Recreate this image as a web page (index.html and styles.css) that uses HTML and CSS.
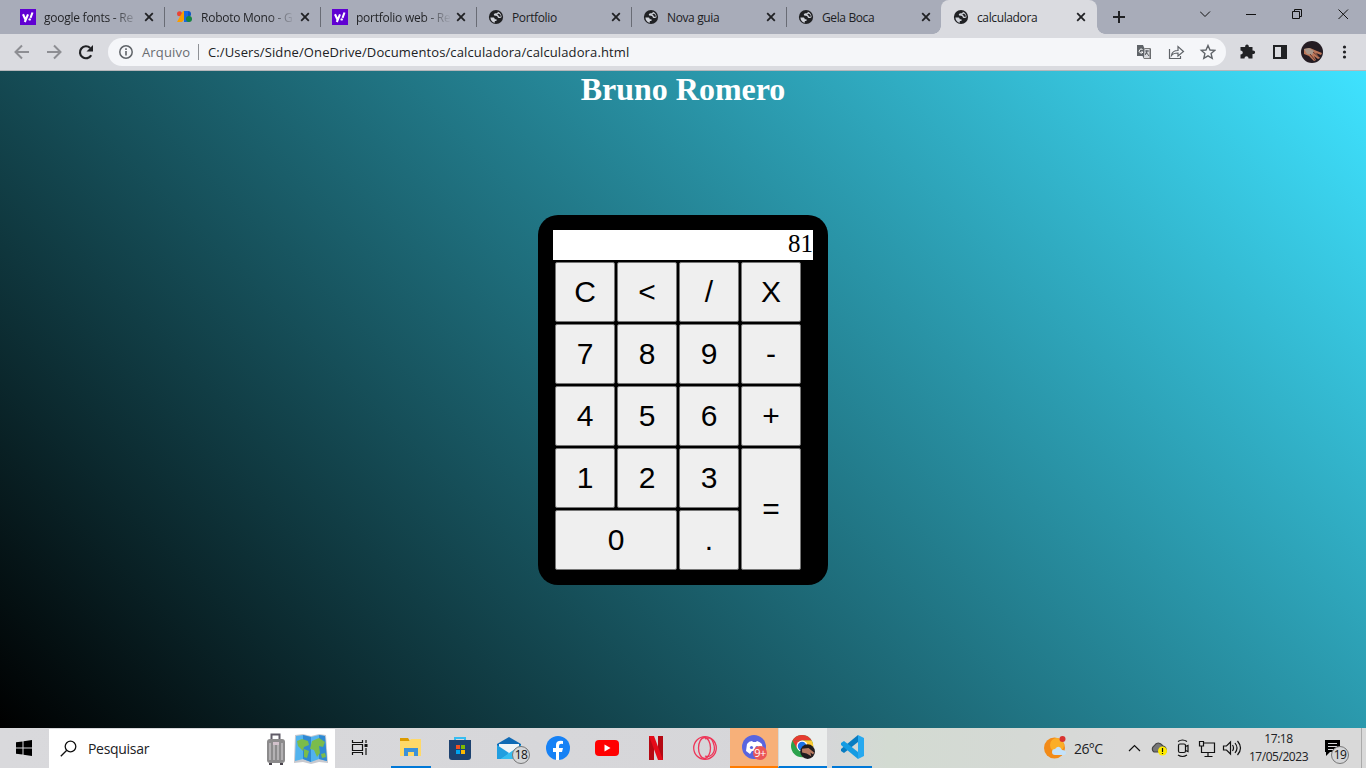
FILE: index.html
```html
<!DOCTYPE html>
<html lang="pt-BR">
<head>
<meta charset="utf-8">
<title>calculadora</title>
<link rel="stylesheet" href="styles.css">
</head>
<body>
<svg width="0" height="0" class="defs" aria-hidden="true">
  <symbol id="globe" viewBox="0 0 16 16"><circle cx="8" cy="8" r="7.100" fill="#202124"/><path d="M2.400 8.500h2.400c1.500 0 1.900.7 1.900 1.700h1.800v1.700H6.800v1.900C4.300 13.300 2.500 11.200 2.400 8.500zM9.800 2.700c2.200.8 3.700 2.800 3.800 5.200-1 1.500-3.800 1.500-4.100-.1-.3-1.400-3.400-.3-3.700-2 0-1.400 1.500-1.500 2.700-1.600 1 0 1.300-.6 1.300-1.500z" fill="#d0d3da"/><path d="M10.500 4.500c1.500.5 2.300 1.800 2.400 3-.7.500-1.700.4-2 0-.3-1.300-1.200-1.800-2.300-2 1 0 1.700-.3 1.900-1z" fill="#202124"/></symbol>
  <symbol id="close" viewBox="0 0 10 10"><path d="M1.200 1.200l7.600 7.600M8.800 1.200L1.200 8.800" stroke="#202124" stroke-width="1.800"/></symbol>
  <symbol id="yahoo" viewBox="0 0 16 16"><path fill="#6001d2" d="M0 0h16v16H0z"/><path d="M3 5.300l2.300 5M8 5.300L4.800 13M12.500 3.500l-2 5.300" stroke="#fff" stroke-width="2.100" fill="none"/><circle cx="9.700" cy="10.400" r="1.200" fill="#fff"/></symbol>
</svg>
<header class="tabs">
  <div class="tab"><svg class="fav"><use href="#yahoo"/></svg><span class="title fade">google fonts - Re</span><svg class="x"><use href="#close"/></svg></div>
  <div class="tab"><svg class="fav" viewBox="0 0 16 16"><circle cx="2.500" cy="4.700" r="2.500" fill="#ea4335"/><path d="M6 2h4v5L5 13H0z" fill="#fa9d00"/><path d="M7 2h4v11H7z" fill="#1a68df"/><path d="M11 2a3 3 0 010 6z" fill="#0b57c4"/><path d="M11 7a3 3 0 010 6z" fill="#34a853"/><circle cx="12" cy="10" r="3" fill="#168443"/></svg><span class="title fade">Roboto Mono - G</span><svg class="x"><use href="#close"/></svg></div>
  <div class="tab"><svg class="fav"><use href="#yahoo"/></svg><span class="title fade">portfolio web - Re</span><svg class="x"><use href="#close"/></svg></div>
  <div class="tab"><svg class="fav"><use href="#globe"/></svg><span class="title">Portfolio</span><svg class="x"><use href="#close"/></svg></div>
  <div class="tab"><svg class="fav"><use href="#globe"/></svg><span class="title">Nova guia</span><svg class="x"><use href="#close"/></svg></div>
  <div class="tab last"><svg class="fav"><use href="#globe"/></svg><span class="title">Gela Boca</span><svg class="x"><use href="#close"/></svg></div>
  <div class="tab active"><svg class="fav"><use href="#globe"/></svg><span class="title">calculadora</span><svg class="x"><use href="#close"/></svg></div>
  <svg class="plus" viewBox="0 0 14 14"><path d="M7 1v12M1 7h12" stroke="#202124" stroke-width="2"/></svg>
  <svg class="window-controls" viewBox="0 0 166 34" fill="none" stroke="#111"><path d="M0 11.500l5 5 5-5M46 14.500h10M92.500 11.500h7v7h-7zM94.500 11v-1.500h7v7H100M138.500 9.500l9.500 9.500M148 9.500l-9.500 9.500"/></svg>
</header>
<nav class="toolbar">
  <svg class="nav-icons" viewBox="0 0 108 36" fill="none" stroke="#8d8e93" stroke-width="2"><path d="M29 18H16M22 11.500L15.500 18l6.500 6.500M47 18h13M54 11.500l6.500 6.500-6.500 6.500"/><path d="M91.200 21.200A6 6 0 1 1 90.200 14" stroke="#202124" stroke-width="2.200"/><path d="M93 11v6.500h-6.500z" fill="#202124" stroke="none"/></svg>
  <div class="address">
    <svg class="info" viewBox="0 0 16 16"><circle cx="8" cy="8" r="6.200" fill="none" stroke="#5f6368" stroke-width="1.500"/><path d="M8 7v4.500M8 4.300v1.600" stroke="#5f6368" stroke-width="1.600"/></svg>
    <span class="scheme">Arquivo</span><span class="rule"></span><span class="url">C:/Users/Sidne/OneDrive/Documentos/calculadora/calculadora.html</span>
    <svg class="page-actions" viewBox="0 0 80 20"><path d="M1 3h6l1.500 3.500H15V17H8l-1.500-3H1z" fill="#5f6368"/><path d="M8.500 6.500H14v10H8" fill="#d9dade" stroke="#777"/><path d="M9 9h4M11 8v1c0 2-1 3-2 4M10 10l3 4" stroke="#5f6368"/><path d="M6.500 7.500A2 2 0 1 0 7 10H5" fill="none" stroke="#fff"/><path d="M33.500 7v9.500h11V14M35.500 13.500c.5-4 3-5 6.500-5V4.500l5.500 5-5.500 4.500v-3c-3 0-5 .5-6.500 2.500z" fill="none" stroke="#5f6368" stroke-width="1.200"/><path d="M72 3.500l2 4.500 4.700.4-3.600 3.200 1.100 4.700-4.200-2.500-4.200 2.500 1.100-4.700-3.600-3.200L70 8z" fill="none" stroke="#5f6368" stroke-width="1.400"/></svg>
  </div>
  <svg class="extensions" viewBox="0 0 140 36"><path d="M15.500 13h3.700c-.7-3.500 4.300-3.500 3.600 0h3.700v3.500c3.500-.6 3.500 4.100 0 3.500v4.500h-4c0-3-4-3-4 0h-4v-4c3 0 3-4 0-4V13z" fill="#202124"/><path d="M48 12h12v12H48z" fill="none" stroke="#202124" stroke-width="2"/><path d="M55 12h5v12h-5z" fill="#202124"/><circle cx="86" cy="18" r="11" fill="#241c23"/><path d="M78 15l6-1 7 3 5 2-1 2-5-2 4 5-2 1-4-3 2 4-2 1-5-5-5-2z" fill="#bd7658"/><path d="M78 15l5-1 5 3-2 4-5-1z" fill="#a99689"/><path d="M84 20l5 6M87 18l6 5" stroke="#653c36"/><g fill="#202124"><circle cx="118.500" cy="13" r="1.600"/><circle cx="118.500" cy="18" r="1.600"/><circle cx="118.500" cy="23" r="1.600"/></g></svg>
</nav>
<main class="page">
  <h1>Bruno Romero</h1>
  <section class="calculator">
    <p class="result">81</p>
    <div class="keys">
      <button>C</button><button>&lt;</button><button>/</button><button>X</button>
      <button>7</button><button>8</button><button>9</button><button>-</button>
      <button>4</button><button>5</button><button>6</button><button>+</button>
      <button>1</button><button>2</button><button>3</button><button class="tall">=</button>
      <button class="wide">0</button><button>.</button>
    </div>
  </section>
</main>
<footer class="taskbar">
  <div class="start"><svg width="16" height="16" viewBox="0 0 16 16"><path d="M0 2.300L6.500 1.400v6H0zM7.500 1.200L16 0v7.400H7.500zM0 8.400h6.500v6.100L0 13.700zM7.500 8.400H16V16l-8.500-1.200z"/></svg></div>
  <div class="search">
    <svg width="18" height="18" viewBox="0 0 18 18" fill="none" stroke="#111" stroke-width="1.300"><circle cx="10.500" cy="6.500" r="5.300"/><path d="M6.800 10.300L.8 16.300"/></svg>
    <span>Pesquisar</span>
    <svg class="travel" width="64" height="34" viewBox="0 0 64 34"><path d="M6.500 9V2.500h8V9" fill="none" stroke="#615c68" stroke-width="2"/><rect x="2" y="7" width="18" height="24" rx="3" fill="#8c8b8c"/><path d="M5 11v17M9 13v15M13 13v15M17 11v17" stroke="#c0bec0" stroke-width="1.500"/><path d="M8 10h6v3H8z" fill="#d2c1cb"/><path d="M4 31h3v2H4zM15 31h3v2h-3z" fill="#4a454d"/><path d="M30 3l8-1 8 2 8-2 7 1 2 28-9-1-8 2-8-2-9 1z" fill="#c8c9cf"/><path d="M31 4l7-1 8 2 8-2 6 1 2 25-8-2-8 3-8-3-8 2z" fill="#52b3ee"/><path d="M38 3l8 2v25l-8-3zM54 3l6 1 2 25-8-2z" fill="#3089d2"/><path d="M32 9l5-2 6 2 1 4-5 2-1 4-5-5zM39 17l5 2-2 7-3-1zM47 9l7-3 6 4-2 5-4-1 1 7-3 4-3-7-4-1zM56 22l4-1 1 4-4 1z" fill="#7bbc4b"/></svg>
  </div>
  <div class="task"><svg width="18" height="18" viewBox="0 0 18 18" fill="none" stroke="#111" stroke-width="1.200"><path d="M1.500 1v2.500h10V1M1.500 5.500h10v6h-10zM1.500 16v-2.500h10V16M15 1v3M15 9v7"/><path d="M13.500 5h3v3h-3z" fill="#111" stroke="none"/></svg></div>
  <div class="apps">
    <div class="app open"><svg viewBox="0 0 24 24"><path d="M1 3h8l2 3H1z" fill="#dc9b00"/><path d="M1 6h9l2-2h10v17H1z" fill="#ffd968"/><path d="M5 21v-8h14v8h-4v-4H9v4z" fill="#3c91d9"/></svg></div>
    <div class="app"><svg viewBox="0 0 24 24"><path d="M7 6V2h10v4" fill="none" stroke="#37bdf1" stroke-width="2"/><path d="M1 4h22v17q0 3-3 3H4q-3 0-3-3z" fill="#1d4270"/><path d="M8 9h4v4H8z" fill="#f25022"/><path d="M13 9h4v4h-4z" fill="#7fba00"/><path d="M8 14h4v4H8z" fill="#00a4ef"/><path d="M13 14h4v4h-4z" fill="#ffb900"/></svg></div>
    <div class="app"><svg viewBox="0 0 24 24"><path d="M0 8L12 1l12 7v15H0z" fill="#106ab5"/><path d="M2 8h20v5l-10 5-10-5z" fill="#f1f5f8"/><path d="M0 9l12 8-9 6H0z" fill="#209ee0"/><path d="M24 9L3 23h21z" fill="#35bdf1"/></svg><span class="badge">18</span></div>
    <div class="app"><svg viewBox="0 0 24 24"><circle cx="12" cy="12" r="12" fill="#1681f5"/><path d="M10 24v-8H7v-4h3V9q0-5 7-4v3q-4-.8-4 2v2h4l-1 4h-3v8z" fill="#fff"/></svg></div>
    <div class="app"><svg viewBox="0 0 24 24"><rect y="4" width="24" height="16" rx="4" fill="#f00"/><path d="M9.500 8.500v7l6-3.500z" fill="#fff"/></svg></div>
    <div class="app"><svg viewBox="0 0 24 24"><path d="M5 0h5v24H5zM14 0h5v24h-5z" fill="#b50913"/><path d="M5 0h5l9 24h-5z" fill="#e50b19"/></svg></div>
    <div class="app"><svg viewBox="0 0 24 24" fill="none" stroke="#ee3658" stroke-width="1.300"><circle cx="12" cy="12" r="11.300"/><ellipse cx="11.500" cy="12" rx="6" ry="10.500"/><path d="M12 3q6-3 8 3 4 10-3 14-3 1-5 0"/></svg></div>
    <div class="app discord"><svg viewBox="0 0 24 24"><circle cx="12" cy="12" r="12" fill="#5965df"/><path d="M5 9q2-3 5-3l1 1h3l1-1q3 1 5 3l1 7-5 3-2-3H10l-2 3-4-3z" fill="#fff"/><circle cx="9.500" cy="12.500" r="1.600" fill="#5965df"/><circle cx="15" cy="12.500" r="1.600" fill="#5965df"/></svg><span class="badge red">9+</span></div>
    <div class="app chrome"><svg viewBox="0 0 26 26"><circle cx="12" cy="12" r="12" fill="#2ba24c"/><path d="M1.600 6A12 12 0 0122.400 6H12z" fill="#e63b30"/><path d="M1.600 6l5 9L12 6z" fill="#e63b30"/><path d="M22.400 6A12 12 0 0112 24l5.500-9L12 6z" fill="#fc3"/><circle cx="12" cy="12" r="6" fill="#fff"/><circle cx="12" cy="12" r="4.700" fill="#1a73e8"/><circle cx="18" cy="18" r="8" fill="#201c1f"/><path d="M12 15l7-1 6 5-1 2-3-2 1 4-5-3-5-1z" fill="#b87b62"/></svg></div>
    <div class="app code"><svg viewBox="0 0 24 24"><path d="M18 0l6 3v18l-6 3z" fill="#27a9ef"/><path d="M18 0v7L4 18l-3-2v-2z" fill="#087cc1"/><path d="M18 24v-7L4 6 1 8v2z" fill="#149ce3"/></svg></div>
  </div>
  <div class="weather"><svg width="24" height="24" viewBox="0 0 24 24"><circle cx="10.500" cy="12" r="10.500" fill="#f28b18"/><circle cx="13" cy="9" r="7" fill="#fbae27"/><path d="M11 19a3 3 0 010-6q4-5 7 1 4 0 4 3 0 2-3 2z" fill="#c4e2fa"/><circle cx="18.500" cy="3" r="3" fill="#d93330"/></svg><span>26°C</span></div>
  <svg class="tray" viewBox="0 0 116 30" fill="none" stroke="#111" stroke-width="1.200"><path d="M1 18l5.500-5.500 5.500 5.500"/><path d="M26 19a3.500 3.500 0 010-6q4-6 9 0 4 1 3 6z" fill="#777" stroke="#444"/><circle cx="34.500" cy="18" r="4.500" fill="#ffeb00" stroke="none"/><path d="M34.500 15v4M34.500 20v1"/><rect x="50.500" y="11" width="7" height="8.500" rx="1.500"/><path d="M57.500 13.500l2.500-1v6l-2.500-1M50 8.500q4.500-3 9 0M50 22q4.500 3 9 0M71.500 13V8.500h4V13zM76 10h10.500v9.500h-13V13M80 19.500v4M76.500 23.500h8M95.500 13h3l4-4v12l-4-4h-3zM104.500 12q2 3 0 6M107 10q4 5 0 10M109.500 8q6 7 0 14"/></svg>
  <div class="clock"><span>17:18</span><span>17/05/2023</span></div>
  <div class="notice"><svg width="17" height="18" viewBox="0 0 17 18"><path d="M1 1h15v12H6l-4 4v-4H1z"/><path d="M4 4.500h9M4 7.500h9M4 10.500h5" stroke="#d8d8da"/></svg><span class="badge">19</span></div>
  <div class="desktop-edge"></div>
</footer>
</body>
</html>
```
FILE: styles.css
```css
* { box-sizing: border-box; }
body { margin: 0; width: 1366px; height: 768px; overflow: hidden; display: flex; flex-direction: column; font: 12px "Open Sans", "Noto Sans", sans-serif; color: #202124; }
svg { display: block; flex: none; }
.defs { position: absolute; }
.tabs { height: 34px; flex: none; display: flex; background: #a8acb9; }
.tab { width: 155px; height: 34px; display: flex; align-items: center; padding: 0 10px 0 12px; position: relative; }
.tab:nth-child(2) { width: 156px; }
.tab:first-child { width: 165px; padding-left: 20px; padding-right: 11px; }
.tab:nth-child(2) { padding-right: 11px; }
.tab:nth-child(3) { width: 156px; padding-left: 11px; padding-right: 11px; }
.tab:nth-child(n+4) { padding-left: 11px; padding-right: 11px; }
.tab:not(.last):not(.active)::after { content: ""; position: absolute; right: 0; top: 7px; width: 1px; height: 20px; background: #696c75; }
.fav { width: 16px; height: 16px; }
.title { margin-left: 8px; flex: 1; overflow: hidden; white-space: nowrap; letter-spacing: -.38px; }
.fade { color: transparent; background: linear-gradient(90deg, #202124 70%, transparent 98%); background-clip: text; letter-spacing: -.25px; }
.x { width: 10px; height: 10px; margin-left: 3px; }
.tab.active { width: 156px; margin-left: -1px; background: #dadbe0; border-radius: 8px 8px 0 0; padding-left: 12px; }
.active::before, .active::after { content: ""; position: absolute; bottom: 0; width: 8px; height: 8px; }
.active::before { left: -8px; background: radial-gradient(circle at 0 0, transparent 7.500px, #dadbe0 8px); }
.active::after { right: -8px; background: radial-gradient(circle at 100% 0, transparent 7.500px, #dadbe0 8px); }
.plus { width: 14px; height: 14px; margin: 10px 0 0 15px; }
.window-controls { width: 166px; height: 34px; margin-left: auto; }
.toolbar { height: 37px; flex: none; display: flex; background: #dadbe0; border-bottom: 1px solid #b6b7bb; }
.nav-icons { width: 108px; height: 36px; }
.address { height: 28px; width: 1118px; margin-top: 4px; border-radius: 14px; background: #f5f6f9; display: flex; align-items: center; padding-left: 10px; font-size: 13px; }
.info { width: 16px; height: 16px; }
.scheme { margin-left: 8px; width: 48px; color: #696c70; letter-spacing: .15px; }
.rule { width: 1px; height: 16px; margin: 0 9px 0 8px; background: #8f9196; }
.url { letter-spacing: .12px; }
.page-actions { width: 80px; height: 20px; margin-left: auto; margin-right: 10px; }
.extensions { width: 140px; height: 36px; }
.page { height: 657px; flex: none; display: flex; flex-direction: column; align-items: center; background: linear-gradient(45deg, #000, #3fe2ff); }
h1 { height: 37px; margin: 0; font: bold 32px/37px "Liberation Serif", serif; color: #fff; }
.calculator { width: 290px; height: 370px; margin-top: 107px; padding: 15px; border-radius: 20px; background: #000; }
.result { width: 260px; height: 30px; margin: 0; background: #fff; color: #000; text-align: right; font: 25px/28px "Liberation Serif", serif; }
.keys { display: grid; grid-template-columns: repeat(4, 60px); grid-auto-rows: 60px; gap: 2px; padding: 2px; }
.keys button { margin: 0; padding: 0 0 1px; border: 1px solid #767676; border-radius: 2px; background: #efefef; color: #000; font: 30px "Liberation Sans", sans-serif; }
.keys .tall { grid-row: span 2; }
.keys .wide { grid-column: span 2; }
.taskbar { height: 40px; flex: none; display: flex; background: linear-gradient(90deg, #d9d9dc 0, #d6d6d9 60%, #d3dbd2 65%, #d5d9d5 75%, #d9d9d9 82%); }
.start { width: 49px; padding: 12px 16px; }
.search { width: 286px; height: 39px; margin-top: 1px; background: #fff; display: flex; align-items: center; padding: 0 6px 0 11px; font-size: 14px; }
.search span { margin-left: 10px; letter-spacing: -.3px; }
.travel { margin-left: auto; }
.task { width: 55px; padding: 11px 0 0 16px; }
.apps { display: flex; }
.app { width: 49px; height: 40px; display: grid; place-items: center; position: relative; padding-right: 7px; }
.app svg { width: 24px; height: 24px; }
.open { border-bottom: 2px solid #0078d7; width: 40px; margin-left: 1px; margin-right: 8px; padding: 0; }
.discord { width: 48px; margin-left: -3px; background: #f7b079; border-bottom: 2px solid #ff7b00; padding: 0; }
.chrome { width: 49px; background: #eceeed; border-bottom: 2px solid #0078d7; border-left: 1px solid #d7d9d9; padding: 0; }
.code { width: 40px; margin-left: 5px; border-bottom: 2px solid #0078d7; padding: 0; }
.badge { position: absolute; left: 24px; top: 18px; width: 18px; height: 18px; border: 1px solid #777; border-radius: 50%; background: #d4d5d7; text-align: center; font: 12px/16px "Open Sans", sans-serif; letter-spacing: -.6px; color: #111; }
.red { left: 23px; top: 18px; width: 14px; height: 14px; border: 0; background: #eb5657; font: 11px/13px "Open Sans", sans-serif; color: #fff; }
.weather { display: flex; align-items: center; margin-left: auto; width: 84px; font-size: 14px; }
.weather span { margin-left: 6px; letter-spacing: -.6px; }
.tray { width: 116px; height: 30px; margin-top: 5px; }
.clock { width: 69px; display: flex; flex-direction: column; align-items: center; line-height: 18px; padding-top: 2px; letter-spacing: -.45px; }
.notice { position: relative; width: 48px; padding: 11px 0 0 11px; }
.notice .badge { left: 18px; }
.desktop-edge { width: 5px; border-left: 1px solid #aaa; }
```
